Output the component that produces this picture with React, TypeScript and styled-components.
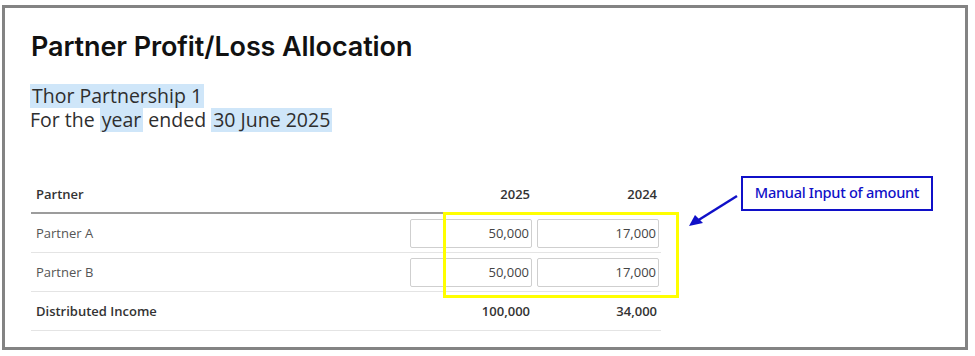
import styled, { createGlobalStyle } from 'styled-components';

const GlobalStyle = createGlobalStyle`
	html, body {
		margin: 0;
		padding: 0;
		background: #ffffff;
	}
	body {
		font-family: 'Open Sans', 'Noto Sans', sans-serif;
	}
`;

const Page = styled.div`
	width: 975px;
	height: 356px;
	padding: 5px 7px 6px 2px;
	box-sizing: border-box;
`;

const Frame = styled.div`
	position: relative;
	height: 100%;
	box-sizing: border-box;
	border: 3px solid #838383;
	padding: 22px 26px 0 26px;
`;

const Title = styled.h1`
	margin: 0;
	font-family: Inter, 'Liberation Sans', sans-serif;
	font-size: 27px;
	font-weight: 600;
	line-height: 34px;
	color: #111111;
	letter-spacing: -0.1px;
`;

const Entity = styled.div`
	margin-top: 20px;
	font-size: 19.5px;
	font-weight: 500;
	line-height: 24px;
	color: #2e2e2e;
`;

const Line = styled.div`
	display: block;
	height: 24px;
	line-height: 24px;
	margin-left: -1px;
	white-space: nowrap;
`;

const Mark = styled.span`
	display: inline-block;
	height: 24px;
	line-height: 24px;
	background: #cfe6f9;
	padding: 0 2px;
`;

const Table = styled.div`
	width: 630px;
	margin-top: 43px;
	font-size: 13px;
	color: #444444;
`;

const Row = styled.div<{ $head?: boolean }>`
	display: grid;
	grid-template-columns: 1fr 127px 127px;
	align-items: center;
	height: ${(p) => (p.$head ? '37px' : '38px')};
	border-bottom: ${(p) => (p.$head ? '2px solid #9c9c9c' : '1px solid #e4e4e4')};
	font-weight: ${(p) => (p.$head ? 600 : 400)};
	color: ${(p) => (p.$head ? '#333333' : '#555555')};
`;

const TotalRow = styled(Row)`
	font-weight: 600;
	color: #333333;
`;

const Label = styled.div`
	padding-left: 5px;
`;

const Num = styled.div`
	text-align: right;
	padding-right: 4px;
`;

const AmountInput = styled.input`
	box-sizing: border-box;
	width: 122px;
	height: 29px;
	margin-left: 3px;
	border: 1px solid #cfcfcf;
	border-radius: 2px;
	padding: 0 2px 0 4px;
	font-family: 'Open Sans', 'Noto Sans', sans-serif;
	font-size: 13px;
	color: #444444;
	text-align: right;
	background: #ffffff;
	outline: none;
`;

const Highlight = styled.div`
	position: absolute;
	left: 438px;
	top: 204px;
	width: 236px;
	height: 86px;
	box-sizing: border-box;
	border: 3px solid #ffff00;
	pointer-events: none;
`;

const Callout = styled.div`
	position: absolute;
	left: 736px;
	top: 168px;
	width: 192px;
	height: 35px;
	box-sizing: border-box;
	border: 2px solid #1010c8;
	display: flex;
	align-items: center;
	justify-content: center;
	font-family: 'Noto Sans', 'Open Sans', sans-serif;
	font-size: 14.6px;
	font-weight: 500;
	color: #1010c8;
	letter-spacing: -0.3px;
	padding-bottom: 3px;
`;

const Arrow = styled.svg`
	position: absolute;
	left: 680px;
	top: 180px;
`;

const rows = [
	{ name: 'Partner A', cur: '50,000', prev: '17,000' },
	{ name: 'Partner B', cur: '50,000', prev: '17,000' }
];

const App = () => {
	return (
		<>
			<GlobalStyle />
			<Page>
				<Frame>
					<Title>Partner Profit/Loss Allocation</Title>
					<Entity>
						<Line>
							<Mark>Thor Partnership 1</Mark>
						</Line>
						<Line>
							For the <Mark>year</Mark> ended <Mark>30 June 2025</Mark>
						</Line>
					</Entity>
					<Table>
						<Row $head>
							<Label>Partner</Label>
							<Num>2025</Num>
							<Num>2024</Num>
						</Row>
						{rows.map((r) => (
							<Row key={r.name}>
								<Label>{r.name}</Label>
								<AmountInput defaultValue={r.cur} />
								<AmountInput defaultValue={r.prev} />
							</Row>
						))}
						<TotalRow>
							<Label>Distributed Income</Label>
							<Num>100,000</Num>
							<Num>34,000</Num>
						</TotalRow>
					</Table>
					<Highlight />
					<Callout>Manual Input of amount</Callout>
					<Arrow width="60" height="40" viewBox="0 0 60 40">
						<line x1="52" y1="8" x2="12" y2="33" stroke="#1010c8" strokeWidth="2.5" />
						<polygon points="4,38 10,27 18,35" fill="#1010c8" />
					</Arrow>
				</Frame>
			</Page>
		</>
	);
};

export default App;
